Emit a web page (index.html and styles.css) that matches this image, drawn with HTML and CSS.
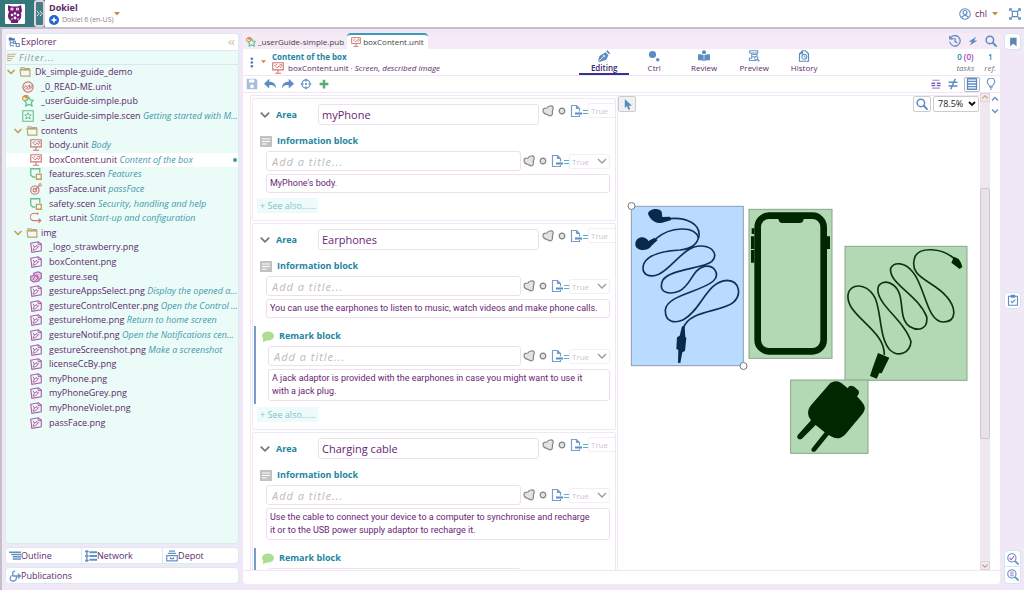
FILE: index.html
```html
<!DOCTYPE html>
<html lang="en">
<head>
<meta charset="utf-8">
<title>Dokiel - boxContent.unit</title>
<link rel="stylesheet" href="styles.css">
</head>
<body>
<svg class="sprite" aria-hidden="true">
  <symbol id="folder" viewBox="0 0 16 14"><path d="M2.5 3.5V1.5h4l1.5 1h6v1M1.500 4h13v8.500h-12z" fill="none" stroke="#bfa570" stroke-width="1.600"/><path d="M3 4h11" stroke="#bfa570" stroke-width="2"/></symbol>
  <symbol id="down" viewBox="0 0 10 10"><path d="M1.500 3 5 6.500 8.500 3" fill="none" stroke="currentColor" stroke-width="1.500"/></symbol>
  <symbol id="caret" viewBox="0 0 6 4"><path d="M0 0h6L3 3.500z" fill="currentColor"/></symbol>
  <symbol id="readme" viewBox="0 0 16 16"><circle cx="8" cy="8" r="6.800" fill="none" stroke="#d0736f" stroke-width="1.500"/><path d="m2 10 3-4 2 3 3-4v4l4-4M3 12l3-2 3 1 5-3" fill="none" stroke="#d0736f" stroke-width="1.300"/></symbol>
  <symbol id="pub" viewBox="0 0 16 16"><path d="m9 3 2 3.500 4 .5-2.500 3 .8 4.500L9 12.500 5 14.500l.5-4.500L3 7.500l4-1z" fill="none" stroke="#66bf8c" stroke-width="1.700"/><path d="M1 7V3l3-2.500h4M4 4l3-2M2 2h5v4" fill="none" stroke="#e58d3d" stroke-width="1.700"/></symbol>
  <symbol id="star" viewBox="0 0 16 16"><path d="M1 1h14v14H1z" fill="none" stroke="#66bf8c" stroke-width="1.500"/><path d="m8 3.500 1.300 3h3L10 8.500l1 3.500-3-2-3 2 1-3.500-2.300-2h3z" fill="none" stroke="#66bf8c" stroke-width="1.300"/></symbol>
  <symbol id="screen" viewBox="0 0 16 16"><path d="M1 1h14v9.500H1zM8 10v4.500M4 15h8" fill="none" stroke="#cf7773" stroke-width="1.500"/><path d="m3 4 4 4 2.500-3L12 8M5 3.500h2M10 3.500h3v3" fill="none" stroke="#cf7773" stroke-width="1.300"/></symbol>
  <symbol id="scen" viewBox="0 0 16 16"><path d="M7 12H4L1 9.500V1h12v6" fill="none" stroke="#66bf8c" stroke-width="1.700"/><path d="M8.500 8.500H15V15H8.500z" fill="none" stroke="#c39d58" stroke-width="1.700"/></symbol>
  <symbol id="target" viewBox="0 0 16 16"><circle cx="6.500" cy="9.500" r="5.500" fill="none" stroke="#cf7773" stroke-width="1.600"/><circle cx="6.500" cy="9.500" r="2.300" fill="none" stroke="#cf7773" stroke-width="1.600"/><circle cx="13.500" cy="2.500" r="1.700" fill="none" stroke="#cf7773" stroke-width="1.300"/><path d="m7 9 5.500-5.500" stroke="#cf7773" stroke-width="1.600"/></symbol>
  <symbol id="route" viewBox="0 0 16 16"><path d="M9 2H5a4.500 4.500 0 0 0 0 9.500h9M11.500 9 14.500 11.500l-3 3" fill="none" stroke="#cf7773" stroke-width="1.500"/><circle cx="10" cy="2" r="1.500" fill="#cf7773"/></symbol>
  <symbol id="img" viewBox="0 0 16 16"><path d="M1 3 11 1l4 3v9L2.500 15z" fill="none" stroke="#b05ba7" stroke-width="1.500"/><path d="M10.500 1.500 11 5l4-.5M4 12l2-4 3-2 1 3-3 3zM4 5l2 3M10 9l2-2" fill="none" stroke="#b05ba7" stroke-width="1.300"/></symbol>
  <symbol id="seq" viewBox="0 0 16 16"><path d="m5 3 6-2 4 2v7l-3 1v2l-7 2-4-3V7l4-1z" fill="#e2c4e3" stroke="#a95aa2" stroke-width="1.500"/><path d="m4 12 2-4 3-3 2 4-4 4M6 5l6 5" fill="none" stroke="#a95aa2" stroke-width="1.300"/></symbol>
  <symbol id="explore" viewBox="0 0 16 14"><path d="M1 1h4l1 1h3v3H1z" fill="#4676ad"/><path d="M3 5v7h5M3 8h5" fill="none" stroke="#6790c1" stroke-width="1.500"/><path d="M7 6h3v3H7zM11 9h4v4h-4z" fill="none" stroke="#6790c1" stroke-width="1.500"/></symbol>
  <symbol id="filter" viewBox="0 0 12 12"><path d="M1 1.500h10M1 4h8M1 6.500h6M1 9h4" stroke="#c9b58a" stroke-width="1.300"/><path d="M1 1v9" stroke="#c9b58a"/></symbol>
  <symbol id="outline" viewBox="0 0 16 14"><path d="M0 2h16M3 5h13M5 8h11M5 11h11" stroke="#6590c4" stroke-width="2"/></symbol>
  <symbol id="network" viewBox="0 0 16 16"><path d="M6 3h10M6 8h10M6 13h10" stroke="#6590c4" stroke-width="2.500"/><path d="M0 2h5M2.500 0v16M0 8h5M0 14h5" stroke="#6590c4" stroke-width="1.800"/></symbol>
  <symbol id="depot" viewBox="0 0 16 15"><path d="M4 1h8M2.500 4h11M1 7h14v7H1z" fill="none" stroke="#6590c4" stroke-width="1.600"/><path d="M6 9v2h4V9" fill="none" stroke="#6590c4" stroke-width="1.600"/></symbol>
  <symbol id="publish" viewBox="0 0 16 16"><path d="M8 1 5 3v4c-4 1-5 7 0 8 4 0 5-3 5-6M5 8h10M12 5l3 3-3 3" fill="none" stroke="#6590c4" stroke-width="1.700"/></symbol>
  <symbol id="save" viewBox="0 0 16 16"><path d="M1 1h12l2 2v12H1z" fill="#a9bddb"/><path d="M4 2h7v4H4z" fill="#fff"/><circle cx="8" cy="11" r="2.500" fill="#fff"/></symbol>
  <symbol id="undo" viewBox="0 0 16 14"><path d="M7 0v4c6 0 9 3 9 9-2-4-5-5-9-4.500V13L0 6.500z" fill="#5d8bc3"/></symbol>
  <symbol id="redo" viewBox="0 0 16 14"><path d="M9 0v4C3 4 0 7 0 13c2-4 5-5 9-4.500V13l7-6.500z" fill="#5d8bc3"/></symbol>
  <symbol id="aim" viewBox="0 0 16 16"><circle cx="8" cy="8" r="5.500" fill="none" stroke="#5d8bc3" stroke-width="1.500"/><path d="M8 1v4M8 11v4M1 8h4M11 8h4" stroke="#5d8bc3" stroke-width="1.500"/><circle cx="8" cy="8" r="1.300" fill="#5d8bc3"/></symbol>
  <symbol id="plus" viewBox="0 0 16 16"><path d="M8 1v14M1 8h14" stroke="#55ae73" stroke-width="4"/></symbol>
  <symbol id="pen" viewBox="0 0 16 16"><path d="m10 3 4 4-3 6-9 3-2-1 2-7z" fill="#5d8bc3"/><path d="m11 2 1.500-2L16 4l-1 2z" fill="#5d8bc3"/><path d="m1 15 6-6" stroke="#fff"/><circle cx="8" cy="8" r="1.300" fill="#fff"/></symbol>
  <symbol id="dots" viewBox="0 0 16 16"><circle cx="6" cy="6" r="4.800" fill="#5d8bc3"/><circle cx="13" cy="13" r="2.300" fill="#5d8bc3"/></symbol>
  <symbol id="book" viewBox="0 0 16 16"><circle cx="8" cy="3" r="2.700" fill="#5d8bc3"/><path d="M0 6c3-1 6 0 8 1.500C10 6 13 5 16 6v8c-3-1-6 0-8 1-2-1-5-2-8-1z" fill="#5d8bc3"/><path d="M8 8v7" stroke="#e3ebf5"/></symbol>
  <symbol id="scroll" viewBox="0 0 16 16"><path d="M3 1h10v3H4a1.500 1.500 0 0 1-1-3zM5 5v6H2v3h9M12 4v6M6 6h5M6 9h4" fill="none" stroke="#6a95c8" stroke-width="1.500"/><circle cx="11" cy="11" r="2.200" fill="#fff" stroke="#5d8bc3" stroke-width="1.300"/><path d="m12 12 3 3" stroke="#5d8bc3" stroke-width="2"/></symbol>
  <symbol id="history" viewBox="0 0 16 16"><path d="M2 5v10h12V5l-4-4H6zM6 1v4H2" fill="none" stroke="#5d8bc3" stroke-width="1.500"/><circle cx="8.500" cy="9" r="3.300" fill="#fff" stroke="#5d8bc3" stroke-width="1.400"/><path d="M8.500 7v2.500h2" fill="none" stroke="#5d8bc3"/></symbol>
  <symbol id="clock" viewBox="0 0 16 16"><path d="M2 4a7 7 0 1 1-1 5M1 1v4h5M8 4v4.500l3 2" fill="none" stroke="#5d8bc3" stroke-width="1.700"/></symbol>
  <symbol id="bolt" viewBox="0 0 16 16"><path d="M13 1 1 9h5l-3 6L15 7h-5z" fill="#5d8bc3"/></symbol>
  <symbol id="search" viewBox="0 0 16 16"><circle cx="6.500" cy="6.500" r="5" fill="none" stroke="#5d8bc3" stroke-width="2"/><path d="m10 10 5.500 5.500" stroke="#5d8bc3" stroke-width="2.500"/></symbol>
  <symbol id="bookmark" viewBox="0 0 12 14"><path d="M2 1h9v12L6.500 9.500 2 13z" fill="#5d83b8"/></symbol>
  <symbol id="user" viewBox="0 0 16 16"><circle cx="8" cy="8" r="7" fill="none" stroke="#5d8bc3" stroke-width="1.400"/><circle cx="8" cy="6" r="2.700" fill="none" stroke="#5d8bc3" stroke-width="1.500"/><path d="M3.500 13c1-4 8-4 9 0" fill="none" stroke="#5d8bc3" stroke-width="1.500"/></symbol>
  <symbol id="full" viewBox="0 0 16 16"><path d="M4.500 4.500h7v7h-7zM1 4V1h3M12 1h3v3M1 12v3h3M12 15h3v-3M1 1l3.500 3.500M15 1l-3.500 3.500M1 15l3.500-3.500M15 15l-3.500-3.500" fill="none" stroke="#5d8bc3" stroke-width="1.500"/></symbol>
  <symbol id="lines" viewBox="0 0 16 16"><path d="M3 3h10M3 13.500h10" stroke="#7d99cf" stroke-width="1.600"/><path d="M2 7h12M2 10h12" stroke="#8c5bc0" stroke-width="2" stroke-dasharray="5 2"/></symbol>
  <symbol id="neq" viewBox="0 0 16 16"><path d="M2 5.500h12M2 10.500h12M11 1 5 15" stroke="#5d8bc3" stroke-width="2"/></symbol>
  <symbol id="list" viewBox="0 0 16 16"><path d="M2 1h12v14H2zM2 4.500h12M2 8h12M2 11.500h12" fill="none" stroke="#5d8bc3" stroke-width="1.700"/></symbol>
  <symbol id="bulb" viewBox="0 0 16 16"><path d="M6 11c0-2-3-3-3-6a5 5 0 0 1 10 0c0 3-3 4-3 6zM6 13h4M7 15h2" fill="none" stroke="#5d8bc3" stroke-width="1.400"/></symbol>
  <symbol id="blob" viewBox="0 0 12 12"><path d="M1 5.500C1 3 3 3 5 3c1-2 5-3 6-1 .8 2-.8 3-.6 4.500.2 2 .4 3-1 4C7.500 11.500 6.500 10 5 9.500 3 9 1 8 1 5.500z" fill="#e3e3e3" stroke="#858585" stroke-width="1.200"/></symbol>
  <symbol id="ring" viewBox="0 0 8 8"><circle cx="4" cy="4" r="2.800" fill="#e2e2e2" stroke="#808080" stroke-width="1.200"/></symbol>
  <symbol id="cond" viewBox="0 0 18 14"><path d="M5 12.500H1.500v-11h5l3 3v3M6.500 1.500v3h3M5 12.500h4.500V11" fill="none" stroke="#789ccc" stroke-width="1.200"/><path d="M5 9.500h7" stroke="#5d8bc3" stroke-width="2"/><path d="M13 6.500h5M13 9.500h5" stroke="#51b3cc" stroke-width="1.200"/></symbol>
  <symbol id="info" viewBox="0 0 12 11"><path d="M0 0h12v11H0z" fill="#c2c2c2"/><path d="M2 3h8M2 5.500h8M2 8h5" stroke="#fff" stroke-width="1.100"/></symbol>
  <symbol id="remark" viewBox="0 0 12 11"><ellipse cx="6" cy="5" rx="6" ry="4.500" fill="#afdd92"/><path d="M1 6v5l5-2z" fill="#afdd92"/></symbol>
  <symbol id="clip" viewBox="0 0 16 16"><path d="M2 3h12v12H2z" fill="none" stroke="#5d8bc3" stroke-width="1.500"/><path d="M5 1h6v4H5z" fill="#5d8bc3"/><path d="m5 9.500 2 2 4-4" fill="none" stroke="#5d8bc3" stroke-width="1.500"/></symbol>
  <symbol id="zoomcheck" viewBox="0 0 16 16"><circle cx="6.500" cy="6.500" r="5.500" fill="none" stroke="#6590c4" stroke-width="1.500"/><path d="m10.500 10.500 5 5" stroke="#6590c4" stroke-width="2.200"/><path d="m3.500 6.500 2 2.500 4-5" fill="none" stroke="#a662bd" stroke-width="1.500"/></symbol>
  <symbol id="zoomlist" viewBox="0 0 16 16"><circle cx="6.500" cy="6.500" r="5.500" fill="none" stroke="#6590c4" stroke-width="1.500"/><path d="m10.500 10.500 5 5" stroke="#6590c4" stroke-width="2.200"/><path d="M4 4h5M4 6.500h5M4 9h5" stroke="#a684cf" stroke-width="1.300"/></symbol>
</svg>

<div class="app">
  <header class="top">
    <div class="brand">
      <svg class="owl" viewBox="0 0 20 20"><rect width="20" height="20" rx="1" fill="#fff"/><path d="M3 1c3 2 10 2 13 0l1 6-1 2c1 5-1 7-3 8v2H6v-2c-3-2-4-5-2-9L3 6z" fill="#751b78"/><g fill="#fff"><circle cx="7" cy="5" r="1.600"/><circle cx="12.500" cy="5" r="1.600"/><circle cx="7" cy="11" r="1.300"/><circle cx="10" cy="9.500" r="1.200"/><circle cx="13" cy="11" r="1.300"/><circle cx="10" cy="14" r="1.400"/><circle cx="7" cy="15" r=".8"/><circle cx="13" cy="15" r=".8"/></g><g fill="#751b78"><circle cx="7" cy="5" r=".6"/><circle cx="12.500" cy="5" r=".6"/></g></svg>
      <button class="more" aria-label="Open menu"><svg viewBox="0 0 8 8"><path d="m1 1 2.500 3L1 7M4.500 1 7 4 4.500 7" fill="none" stroke="#fff" stroke-width="1"/></svg></button>
    </div>
    <div class="product">
      <strong>Dokiel</strong>
      <span class="version"><svg class="i10" viewBox="0 0 10 10"><circle cx="5" cy="5" r="5" fill="#2362cf"/><path d="m5 1.500 1 2.500 2.500 1L6 6 5 8.500 4 6 1.500 5 4 4z" fill="#fff"/></svg>Dokiel 6 (en-US)</span>
    </div>
    <svg class="caret"><use href="#caret"/></svg>
    <div class="account">
      <svg class="i12"><use href="#user"/></svg><span>chl</span><svg class="caret"><use href="#caret"/></svg>
      <button class="plain fullscreen" aria-label="Full screen"><svg class="i12"><use href="#full"/></svg></button>
    </div>
  </header>

  <div class="work">
    <aside class="side">
      <section class="panel explorer">
        <h2 class="panel-head"><svg class="i12"><use href="#explore"/></svg>Explorer<button class="plain collapse" aria-label="Collapse"><svg viewBox="0 0 8 8"><path d="M3.500 1.500 1 4l2.500 2.500M7 1.500 4.500 4 7 6.500" fill="none" stroke="#b98d45"/></svg></button></h2>
        <label class="filter"><svg class="i10"><use href="#filter"/></svg><input type="text" placeholder="Filter..." aria-label="Filter"></label>
        <ul class="tree">
          <li class="l0"><svg class="i10 gold"><use href="#down"/></svg><svg class="i12"><use href="#folder"/></svg><a href="#">Dk_simple-guide_demo</a></li>
          <li class="l1"><svg class="i12"><use href="#readme"/></svg><a href="#">_0_READ-ME.unit</a></li>
          <li class="l1"><svg class="i12"><use href="#pub"/></svg><a href="#">_userGuide-simple.pub</a></li>
          <li class="l1"><svg class="i12"><use href="#star"/></svg><a href="#">_userGuide-simple.scen <i>Getting started with M...</i></a></li>
          <li class="l1 dir"><svg class="i10 gold"><use href="#down"/></svg><svg class="i12"><use href="#folder"/></svg><a href="#">contents</a></li>
          <li class="l2"><svg class="i12"><use href="#screen"/></svg><a href="#">body.unit <i>Body</i></a></li>
          <li class="l2 current"><svg class="i12"><use href="#screen"/></svg><a href="#">boxContent.unit <i>Content of the box</i></a><b class="dot"></b></li>
          <li class="l2"><svg class="i12"><use href="#scen"/></svg><a href="#">features.scen <i>Features</i></a></li>
          <li class="l2"><svg class="i12"><use href="#target"/></svg><a href="#">passFace.unit <i>passFace</i></a></li>
          <li class="l2"><svg class="i12"><use href="#scen"/></svg><a href="#">safety.scen <i>Security, handling and help</i></a></li>
          <li class="l2"><svg class="i12"><use href="#route"/></svg><a href="#">start.unit <i>Start-up and configuration</i></a></li>
          <li class="l1 dir"><svg class="i10 gold"><use href="#down"/></svg><svg class="i12"><use href="#folder"/></svg><a href="#">img</a></li>
          <li class="l2"><svg class="i12"><use href="#img"/></svg><a href="#">_logo_strawberry.png</a></li>
          <li class="l2"><svg class="i12"><use href="#img"/></svg><a href="#">boxContent.png</a></li>
          <li class="l2"><svg class="i12"><use href="#seq"/></svg><a href="#">gesture.seq</a></li>
          <li class="l2"><svg class="i12"><use href="#img"/></svg><a href="#">gestureAppsSelect.png <i>Display the opened a...</i></a></li>
          <li class="l2"><svg class="i12"><use href="#img"/></svg><a href="#">gestureControlCenter.png <i>Open the Control ...</i></a></li>
          <li class="l2"><svg class="i12"><use href="#img"/></svg><a href="#">gestureHome.png <i>Return to home screen</i></a></li>
          <li class="l2"><svg class="i12"><use href="#img"/></svg><a href="#">gestureNotif.png <i>Open the Notifications cen...</i></a></li>
          <li class="l2"><svg class="i12"><use href="#img"/></svg><a href="#">gestureScreenshot.png <i>Make a screenshot</i></a></li>
          <li class="l2"><svg class="i12"><use href="#img"/></svg><a href="#">licenseCcBy.png</a></li>
          <li class="l2"><svg class="i12"><use href="#img"/></svg><a href="#">myPhone.png</a></li>
          <li class="l2"><svg class="i12"><use href="#img"/></svg><a href="#">myPhoneGrey.png</a></li>
          <li class="l2"><svg class="i12"><use href="#img"/></svg><a href="#">myPhoneViolet.png</a></li>
          <li class="l2"><svg class="i12"><use href="#img"/></svg><a href="#">passFace.png</a></li>
        </ul>
      </section>
      <nav class="panel dock">
        <button><svg class="i12"><use href="#outline"/></svg>Outline</button>
        <button><svg class="i12"><use href="#network"/></svg>Network</button>
        <button><svg class="i12"><use href="#depot"/></svg>Depot</button>
      </nav>
      <nav class="panel dock">
        <button><svg class="i12"><use href="#publish"/></svg>Publications</button>
      </nav>
    </aside>

    <main class="editor">
      <div class="tabs">
        <button class="tab"><svg class="i10"><use href="#pub"/></svg>_userGuide-simple.pub</button>
        <button class="tab active"><svg class="i10"><use href="#screen"/></svg>boxContent.unit</button>
        <div class="tab-tools">
          <button class="plain" aria-label="History"><svg class="i12"><use href="#clock"/></svg></button>
          <button class="plain" aria-label="Actions"><svg class="i10"><use href="#bolt"/></svg></button>
          <button class="plain" aria-label="Search"><svg class="i12"><use href="#search"/></svg></button>
        </div>
      </div>

      <div class="doc-head">
        <button class="plain menu" aria-label="Document menu"><svg viewBox="0 0 12 12"><g fill="#4d7ab5"><circle cx="2" cy="2" r="1.400"/><circle cx="2" cy="6" r="1.400"/><circle cx="2" cy="10" r="1.400"/></g></svg></button>
        <svg class="caret small"><use href="#caret"/></svg>
        <div class="doc-name">
          <strong>Content of the box</strong>
          <span><svg class="i12"><use href="#screen"/></svg><span class="path">boxContent.unit · <i>Screen, described image</i></span></span>
        </div>
        <nav class="views">
          <button class="on"><svg class="i12"><use href="#pen"/></svg>Editing</button>
          <button><svg class="i12"><use href="#dots"/></svg>Ctrl</button>
          <button><svg class="i12"><use href="#book"/></svg>Review</button>
          <button><svg class="i12"><use href="#scroll"/></svg>Preview</button>
          <button><svg class="i12"><use href="#history"/></svg>History</button>
        </nav>
        <dl class="counts">
          <div><dd>0 <em>(0)</em></dd><dt>tasks</dt></div>
          <div><dd>1</dd><dt>ref.</dt></div>
        </dl>
      </div>

      <div class="toolbar">
        <button class="plain" aria-label="Save"><svg class="i12"><use href="#save"/></svg></button>
        <button class="plain" aria-label="Undo"><svg class="i12"><use href="#undo"/></svg></button>
        <button class="plain" aria-label="Redo"><svg class="i12"><use href="#redo"/></svg></button>
        <button class="plain" aria-label="Locate"><svg class="i12"><use href="#aim"/></svg></button>
        <button class="plain add" aria-label="Add"><svg class="i10"><use href="#plus"/></svg></button>
        <div class="modes">
          <button class="plain" aria-label="Comments"><svg class="i12"><use href="#lines"/></svg></button>
          <button class="plain" aria-label="Differences"><svg class="i12"><use href="#neq"/></svg></button>
          <button class="plain pressed" aria-label="Form"><svg class="i12"><use href="#list"/></svg></button>
          <button class="plain" aria-label="Tips"><svg class="i12"><use href="#bulb"/></svg></button>
        </div>
      </div>

      <div class="content">
        <div class="form">
          <section class="area">
            <div class="line area-line"><svg class="i12 grey"><use href="#down"/></svg><label for="a1">Area</label><input id="a1" class="title" value="myPhone"><span class="cond"><svg class="i12"><use href="#blob"/></svg><svg class="i8"><use href="#ring"/></svg><svg class="doc"><use href="#cond"/></svg><select aria-label="Condition"><option>True</option></select></span></div>
            <div class="block">
              <h3><svg class="mark"><use href="#info"/></svg>Information block</h3>
              <div class="line"><input class="sub" placeholder="Add a title..." aria-label="Block title"><span class="cond"><svg class="i12"><use href="#blob"/></svg><svg class="i8"><use href="#ring"/></svg><svg class="doc"><use href="#cond"/></svg><select aria-label="Condition"><option>True</option></select></span></div>
              <textarea rows="1" aria-label="Text">MyPhone's body.</textarea>
            </div>
            <button class="see">+ See also......</button>
          </section>

          <section class="area">
            <div class="line area-line"><svg class="i12 grey"><use href="#down"/></svg><label for="a2">Area</label><input id="a2" class="title" value="Earphones"><span class="cond"><svg class="i12"><use href="#blob"/></svg><svg class="i8"><use href="#ring"/></svg><svg class="doc"><use href="#cond"/></svg><select aria-label="Condition"><option>True</option></select></span></div>
            <div class="block">
              <h3><svg class="mark"><use href="#info"/></svg>Information block</h3>
              <div class="line"><input class="sub" placeholder="Add a title..." aria-label="Block title"><span class="cond"><svg class="i12"><use href="#blob"/></svg><svg class="i8"><use href="#ring"/></svg><svg class="doc"><use href="#cond"/></svg><select aria-label="Condition"><option>True</option></select></span></div>
              <textarea rows="1" aria-label="Text">You can use the earphones to listen to music, watch videos and make phone calls.</textarea>
            </div>
            <div class="block note">
              <h3><svg class="mark"><use href="#remark"/></svg>Remark block</h3>
              <div class="line"><input class="sub" placeholder="Add a title..." aria-label="Remark title"><span class="cond"><svg class="i12"><use href="#blob"/></svg><svg class="i8"><use href="#ring"/></svg><svg class="doc"><use href="#cond"/></svg><select aria-label="Condition"><option>True</option></select></span></div>
              <textarea class="long" rows="2" aria-label="Remark">A jack adaptor is provided with the earphones in case you might want to use it with a jack plug.</textarea>
            </div>
            <button class="see">+ See also......</button>
          </section>

          <section class="area">
            <div class="line area-line"><svg class="i12 grey"><use href="#down"/></svg><label for="a3">Area</label><input id="a3" class="title" value="Charging cable"><span class="cond"><svg class="i12"><use href="#blob"/></svg><svg class="i8"><use href="#ring"/></svg><svg class="doc"><use href="#cond"/></svg><select aria-label="Condition"><option>True</option></select></span></div>
            <div class="block">
              <h3><svg class="mark"><use href="#info"/></svg>Information block</h3>
              <div class="line"><input class="sub" placeholder="Add a title..." aria-label="Block title"><span class="cond"><svg class="i12"><use href="#blob"/></svg><svg class="i8"><use href="#ring"/></svg><svg class="doc"><use href="#cond"/></svg><select aria-label="Condition"><option>True</option></select></span></div>
              <textarea class="long" rows="2" aria-label="Text">Use the cable to connect your device to a computer to synchronise and recharge it or to the USB power supply adaptor to recharge it.</textarea>
            </div>
            <div class="block note">
              <h3><svg class="mark"><use href="#remark"/></svg>Remark block</h3>
              <div class="line"><input class="sub short" aria-label="Remark title"></div>
            </div>
          </section>
        </div>

        <div class="stage">
          <svg class="picture" width="360" height="362" viewBox="620 96 360 362">
            <g transform="translate(620 195) scale(.33333)">
              <rect x="34" y="34" width="336" height="478" fill="#b9dbff" stroke="#8d9eae" stroke-width="3"/>
              <g fill="none" stroke="#143050" stroke-width="5">
                <path d="M148 71C205 66 240 90 237 122C232 150 215 160 180 165C120 168 85 180 72 205C60 240 90 250 118 237C160 215 195 150 245 153C280 155 295 180 275 200C245 222 150 222 128 256C112 295 150 300 178 288C215 270 215 225 252 214C285 208 300 240 280 258C245 290 140 300 136 345C135 382 165 386 190 374C245 345 260 258 322 256C360 258 365 300 340 322C305 352 205 345 190 400"/>
                <path d="M108 131C150 95 225 90 236 130"/>
              </g>
              <g fill="#0b2a4b"><path d="M84 56C88 40 118 38 125 50L127 66 150 65 154 75 132 82C115 88 92 80 84 56zM46 148C46 125 75 120 85 138L104 128 113 135 94 153C84 172 45 168 46 148z"/><path d="m186 394 8 1 2 30 3 4-4 39-8 4-6 32-7-1 1-38-6-3 2-35 8-5z"/></g>
              <rect x="387" y="43" width="249" height="447" fill="#b2d9b3" stroke="#8ba38c" stroke-width="3"/>
              <rect x="413" y="62" width="198" height="407" rx="34" fill="none" stroke="#002700" stroke-width="20"/>
              <path d="M474 70h78c-2 7-3 14-12 14h-54c-9 0-9-7-12-14zM395 100h8v17h-8zM393 124h10v38h-10zM393 165h10v38h-10zM621 124h9v38h-9z" fill="#002700"/>
            </g>
            <g transform="translate(780 235) scale(.33333)">
              <rect x="195" y="34" width="366" height="402" fill="#b2d9b3" stroke="#8ba38c" stroke-width="3"/>
              <path d="M523 71C485 38 420 35 405 65C382 130 460 135 500 185C530 220 530 260 490 261C440 260 435 155 400 113C375 80 342 80 332 100C325 145 415 180 440 245C445 283 415 290 390 275C350 250 380 180 340 150C320 135 290 140 294 170C300 215 375 260 393 320C390 355 355 368 330 345C295 310 305 210 280 180C255 145 215 145 205 175C190 240 315 280 313 360" fill="none" stroke="#0b350d" stroke-width="5"/>
              <path d="m522 65 14 7 7 11 4 13-8 6-11-8-14-11zM294 354l34 14-23 47-7-1-8 17-20-8 7-22z" fill="#002700"/>
              <rect x="32" y="435" width="232" height="220" fill="#b2d9b3" stroke="#8ba38c" stroke-width="3"/>
              <path d="M151 444q18-11 34 1l18 15c5-12 18-8 24-1l9 8q3 9-5 17l15 17q15 17 3 34l-54 64q-20 19-42 5l-7-4-37 46c-8 10-20 2-12-8l37-46-27-22-39 39c-8 10-22 0-14-10l39-43c-12-15-11-32 0-45z" fill="#002700"/>
            </g>
            <g fill="#fff" stroke="#777"><circle cx="631.500" cy="206" r="3.500"/><circle cx="743.500" cy="366" r="3.500"/></g>
          </svg>
          <div class="stage-bar">
            <button class="tool pointer" aria-label="Select"><svg viewBox="0 0 10 12"><path d="M2 0v10l2.500-2L6 12l2-1-1.500-3.500H10z" fill="#5d8bc3"/></svg></button>
            <button class="tool" aria-label="Zoom"><svg class="i12"><use href="#search"/></svg></button>
            <select class="zoom" aria-label="Zoom level"><option>78.5%</option></select>
          </div>
        </div>

        <div class="scroll">
          <button class="plain" aria-label="Scroll up"><svg viewBox="0 0 8 8"><path d="m1 5 3-3 3 3" fill="none" stroke="#c39d58" stroke-width="1.200"/></svg></button>
          <div class="track"><div class="thumb"></div></div>
          <button class="plain" aria-label="Scroll down"><svg viewBox="0 0 8 8"><path d="m1 3 3 3 3-3" fill="none" stroke="#c39d58" stroke-width="1.200"/></svg></button>
        </div>
        <div class="steps">
          <button class="plain" aria-label="Previous"><svg viewBox="0 0 8 8"><path d="m1 5.500 3-3 3 3" fill="none" stroke="#6590c4" stroke-width="1.400"/></svg></button>
          <button class="plain" aria-label="Next"><svg viewBox="0 0 8 8"><path d="m1 2.500 3 3 3-3" fill="none" stroke="#6590c4" stroke-width="1.400"/></svg></button>
        </div>
      </div>
    </main>

    <aside class="rail">
      <button aria-label="Bookmarks"><svg class="i10"><use href="#bookmark"/></svg></button>
      <button aria-label="Tasks"><svg class="i12"><use href="#clip"/></svg></button>
      <div class="pair">
        <button aria-label="Check"><svg class="i12"><use href="#zoomcheck"/></svg></button>
        <button aria-label="Results"><svg class="i12"><use href="#zoomlist"/></svg></button>
      </div>
    </aside>
  </div>
</div>
</body>
</html>
```
FILE: styles.css
```css
* { box-sizing: border-box; }
body {
  margin: 0;
  font: 9px/14px "Open Sans", "Noto Sans", sans-serif;
  color: #5c2a6b;
  background: #f0e8f6;
}
button, input, select, textarea { font: inherit; color: inherit; margin: 0; }
button { display: flex; align-items: center; justify-content: center; padding: 0; border: 0; background: none; white-space: nowrap; }
svg { flex: none; display: block; }
h2, h3, ul, dl, dd { margin: 0; padding: 0; font: inherit; list-style: none; }
a { color: inherit; text-decoration: none; }

.sprite { position: absolute; width: 0; height: 0; }
.i8 { width: 8px; height: 8px; }
.i10 { width: 10px; height: 10px; }
.i12 { width: 12px; height: 12px; }
.caret { width: 6px; height: 4px; color: #c58d43; }
.gold { color: #c2994f; }
.grey { color: #777; }

.app { display: flex; flex-direction: column; height: 100vh; border-left: 2px solid #c4bfc8; }

/* Top bar */
.top { display: flex; align-items: center; height: 29px; flex: none; background: #fff; border-bottom: 2px solid #c5bfcc; }
.brand { display: flex; align-items: center; align-self: stretch; gap: 9px; padding-left: 3px; margin-left: -2px; background: #35787b; }
.owl { width: 20px; height: 20px; margin-left: 2px; }
.more { width: 11px; height: 27px; border: 2px solid #e3d0e5; border-radius: 3px; background: #417f82; }
.more svg { width: 7px; height: 7px; }
.product { display: flex; flex-direction: column; padding: 0 0 0 4px; line-height: 12px; }
.version { display: flex; align-items: center; gap: 3px; color: #8a7f8c; font-size: 7px; }
.account { display: flex; align-items: center; gap: 4px; margin-left: auto; }
.account .caret { margin-left: 1px; }
.fullscreen { margin: 0 3px 0 7px; }

.work { display: flex; flex: 1; min-height: 0; gap: 4px; padding: 4px 3px 6px 3px; }

/* Left column */
.side { display: flex; flex-direction: column; gap: 3px; width: 234px; flex: none; }
.panel { border: 1px solid #d9ebee; border-radius: 4px; background: #fff; }
.explorer { flex: 1; min-height: 0; overflow: hidden; background: #eafbf8; }
.panel-head { display: flex; align-items: center; gap: 1px; height: 17px; padding: 0 3px 0 2px; background: #fff; border-bottom: 1px solid #d9ebee; }
.collapse { margin-left: auto; }
.collapse svg { width: 7px; height: 7px; }
.filter { display: flex; align-items: center; gap: 2px; height: 14px; padding-left: 1px; border-bottom: 1px solid #d3e9ec; }
.filter input { flex: 1; min-width: 0; border: 0; padding: 0; background: none; font-style: italic; letter-spacing: 1px; }
.filter input::placeholder { color: #8d959a; opacity: 1; }
.tree { display: grid; grid-template-rows: repeat(25, 1fr); height: 365px; }
.tree li { display: flex; align-items: center; gap: 7px; min-width: 0; min-height: 0; }
.tree a { white-space: nowrap; line-height: 14px; }
.tree i { color: #4499ac; }
.tree .l0 { gap: 3px; padding-left: 0; }
.tree .l0 a { padding-left: 1px; }
.tree .l1 { padding-left: 16px; }
.tree .dir { gap: 3px; padding-left: 7px; }
.tree .l2 { padding-left: 24px; }
.tree .current { padding-right: 1px; background: #fff; }
.dot { width: 4px; height: 4px; flex: none; border-radius: 50%; margin-left: auto; background: #3f97aa; }
.dock { display: flex; height: 17px; }
.dock button { flex: 78; justify-content: flex-start; gap: 0; padding: 0 3px; border-left: 1px solid #d9ebee; }
.dock button:nth-child(2) { flex-grow: 84; }
.dock button:first-child { border-left: 0; }

/* Editor frame */
.editor { display: flex; flex-direction: column; flex: 1; min-width: 0; padding-bottom: 13px; background: #fff; border-radius: 4px; }
.tabs { display: flex; height: 16px; flex: none; background: #f6eaf6; border-radius: 4px 4px 0 0; font-size: 8px; color: #444; }
.tab { gap: 2px; padding: 2px 2px 0 3px; }
.tab.active { gap: 2px; padding: 0 4px; margin-left: 1px; border-top: 2px solid #3d9cb5; border-radius: 4px 4px 0 0; background: #fff; }
.tab-tools { display: flex; gap: 7px; margin-left: auto; padding-right: 3px; }

.doc-head { display: flex; align-items: center; height: 27px; flex: none; padding-right: 4px; border-bottom: 1px solid #f1e6f3; font-size: 8px; }
.menu { padding-left: 7px; }
.menu svg { width: 11px; height: 11px; }
.doc-name { display: flex; flex-direction: column; width: 180px; margin-left: 6px; line-height: 11px; white-space: nowrap; }
.doc-name strong, .form label, .form h3 { color: #2385a0; font-weight: 700; }
.doc-name > span { display: flex; align-items: center; gap: 4px; }
.small { width: 5px; margin-left: 0; }
.views { display: flex; flex: 1; align-self: stretch; justify-content: center; }
.views button { flex-direction: column; width: 50px; line-height: 11px; border-bottom: 2px solid transparent; }
.views .on { color: #35246f; font-weight: 600; border-color: #363291; }
.counts { display: flex; gap: 10px; text-align: center; line-height: 11px; }
.counts dd { color: #2385a0; font-weight: 600; }
.counts em { color: #9a3bc4; font-style: normal; }
.counts dt { color: #777; font-style: italic; }

.toolbar { display: flex; align-items: center; gap: 6px; height: 17px; flex: none; padding: 0 3px; border-bottom: 1px solid #f1e6f3; }
.add { width: 12px; }
.modes { display: flex; align-items: center; gap: 5px; margin-left: auto; }
.pressed { width: 16px; height: 15px; border: 1px solid #bbb; border-radius: 2px; }

.content { display: flex; flex: 1; min-height: 0; border-bottom: 1px solid #f1e6f3; }

/* Form */
.form { display: flex; flex-direction: column; gap: 2px; width: 368px; flex: none; margin: 2px 0 0 7px; padding: 2px 1px 0; overflow: hidden; border: 1px solid #f1e6f3; border-bottom: 0; }
.area { flex: none; padding: 5px 5px 7px 4px; overflow: hidden; border: 1px solid #f1e6f3; border-radius: 2px; }
.line { display: flex; align-items: center; gap: 2px; }
.area-line { height: 21px; padding-left: 2px; }
.area-line label { flex: none; width: 42px; padding-left: 2px; }
.area-line > .i12 { margin-right: 1px; }
.area-line .cond { margin: -8px 0 0 1px; }
.form input { min-width: 0; border: 1px solid #eddfee; border-radius: 3px; background: #fff; }
.title { flex: none; width: 221px; height: 21px; padding: 0 3px; font-size: 11px; color: #682574; }
.sub { flex: 1; height: 20px; padding: 0 5px; font-size: 11px; font-style: italic; letter-spacing: 1px; }
.sub::placeholder { color: #bcbcbc; opacity: 1; }
.short { margin-right: 89px; }
.cond { display: flex; align-items: center; flex: none; gap: 4px; }
.cond .doc { width: 18px; height: 14px; }
.cond select {
  width: 41px; height: 15px; margin-left: -4px; padding: 0 0 0 2px; appearance: none;
  border: 1px solid #f4edf5; border-radius: 2px; color: #cfc4d1; font-size: 8px; line-height: 13px;
  background: #fff url("data:image/svg+xml,%3Csvg xmlns='http://www.w3.org/2000/svg' width='10' height='8'%3E%3Cpath d='M1 2l4 4 4-4' fill='none' stroke='%23999' stroke-width='1.300'/%3E%3C/svg%3E") no-repeat right 2px center;
}
.block { padding: 8px 0 0 9px; }
.block h3 { display: flex; align-items: center; gap: 5px; height: 16px; margin: 0 0 2px -6px; }
.block h3 .mark { width: 12px; height: 11px; }
.form textarea { display: block; width: 100%; margin-top: 3px; padding: 2px 0 2px 3px; border: 1px solid #eddfee; border-radius: 3px; resize: none; overflow: hidden; font-family: Roboto, "Open Sans", sans-serif; line-height: 13px; color: #682574; }
.form .long { padding-right: 16px; }
.note { margin: 8px 0 0 -3px; padding: 2px 0 3px 12px; border-left: 2px solid #789cc8; }
.see { height: 15px; margin-top: 5px; padding: 0 2px 0 3px; color: #80c3c9; background: #effbfa; }
.note + .see { margin-top: 3px; }

/* Picture canvas */
.stage { position: relative; flex: 1; min-width: 0; overflow: hidden; border-top: 1px solid #f1e6f3; margin-top: 2px; }
.stage-bar { display: flex; align-items: center; gap: 2px; padding-right: 1px; }
.picture { position: absolute; left: 2px; top: 0; }
.tool { position: relative; width: 18px; height: 16px; border: 1px solid #ccc; border-radius: 2px; background: #fff; }
.pointer { margin-right: auto; background: #f1f1f1; }
.pointer svg { width: 9px; height: 11px; }
.zoom {
  position: relative; width: 46px; height: 16px; padding: 0 4px; appearance: none; color: #222; border: 1px solid #ccc; border-radius: 2px;
  background: #fff url("data:image/svg+xml,%3Csvg xmlns='http://www.w3.org/2000/svg' width='8' height='8'%3E%3Cpath d='M1 2l3 3 3-3' fill='none' stroke='%23111' stroke-width='1.800'/%3E%3C/svg%3E") no-repeat right 2px center;
}
.scroll { display: flex; flex-direction: column; width: 10px; background: #efe9ef; }
.scroll button { height: 9px; border: 1px solid #ddd4dc; }
.scroll svg { width: 8px; height: 7px; }
.track { display: flex; flex: 1; flex-direction: column; }
.track::before { content: ""; flex: 87; }
.track::after { content: ""; flex: 123; }
.thumb { flex: 250; border: 1px solid #cfc7d0; border-radius: 2px; background: #e8e3e9; }
.steps { display: flex; flex-direction: column; gap: 4px; width: 10px; padding-top: 2px; }
.steps svg { width: 8px; height: 8px; }

/* Right rail */
.rail { display: flex; flex-direction: column; justify-content: space-between; width: 17px; flex: none; }
.rail button { width: 17px; height: 17px; border: 1px solid #d5e6ee; border-radius: 4px; background: #fff; }
.rail .pair button:first-child { border-radius: 4px 4px 0 0; }
.rail .pair button:last-child { border-radius: 0 0 4px 4px; border-top: 0; }
```
